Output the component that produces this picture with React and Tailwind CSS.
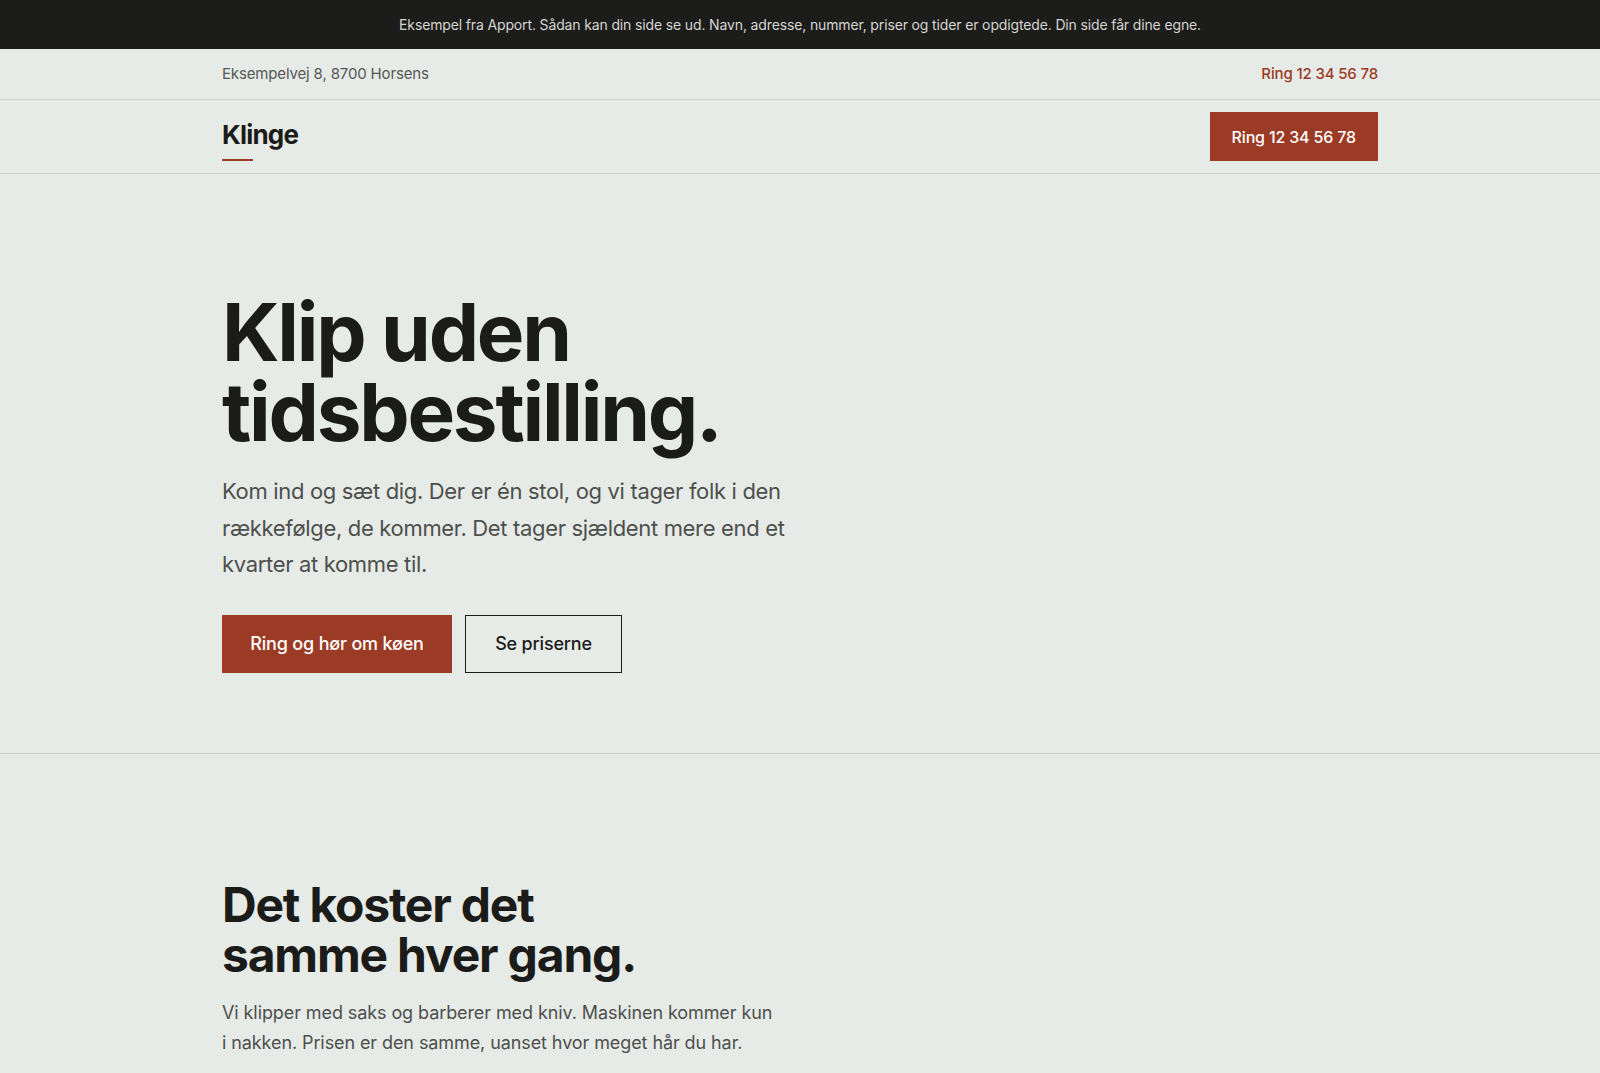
import React from 'react';

const App = () => {
    return (
        <div className="min-h-screen bg-[#e7ebe8] text-[#1b1c1a] font-['Inter','Liberation_Sans',sans-serif]">
            {/* Demo notice */}
            <div className="h-[49px] bg-[#1c1c1a] flex items-center justify-center">
                <p className="text-[14px] text-[#d6d6d2] tracking-[-0.01em]">
                    Eksempel fra Apport. Sådan kan din side se ud. Navn, adresse, nummer, priser og tider er opdigtede. Din side får dine egne.
                </p>
            </div>

            {/* Address bar */}
            <div className="border-b border-[#cdd1ce]">
                <div className="max-w-[1156px] mx-auto h-[50px] flex items-center justify-between">
                    <span className="text-[15px] text-[#555755] tracking-[-0.01em]">Eksempelvej 8, 8700 Horsens</span>
                    <a className="text-[15px] font-medium text-[#9b3a25] tracking-[-0.01em]">Ring 12 34 56 78</a>
                </div>
            </div>

            {/* Nav */}
            <header className="border-b border-[#cdd1ce]">
                <div className="max-w-[1156px] mx-auto h-[73px] flex items-center justify-between">
                    <div className="flex flex-col pt-[10px]">
                        <span className="text-[26px] font-bold tracking-[-0.03em] leading-none">Klinge</span>
                        <span className="mt-[11px] w-[31px] h-[2px] bg-[#9b3a25]" />
                    </div>
                    <a className="h-[49px] px-[22px] flex items-center bg-[#9b3a25] text-white text-[16px] font-medium tracking-[-0.01em]">
                        Ring 12 34 56 78
                    </a>
                </div>
            </header>

            {/* Hero */}
            <section className="border-b border-[#cdd1ce]">
                <div className="max-w-[1156px] mx-auto pt-[118px] pb-[80px]">
                    <h1 className="text-[80px] leading-[80px] font-bold tracking-[-0.028em]">
                        Klip uden<br />tidsbestilling.
                    </h1>
                    <p className="mt-[21px] max-w-[575px] text-[22px] leading-[36.5px] text-[#4d4f4c] tracking-[-0.015em]">
                        Kom ind og sæt dig. Der er én stol, og vi tager folk i den rækkefølge, de kommer. Det tager sjældent mere end et kvarter at komme til.
                    </p>
                    <div className="mt-[32px] flex gap-[13px]">
                        <a className="h-[58px] w-[230px] flex items-center justify-center bg-[#9b3a25] text-white text-[18px] font-medium tracking-[-0.01em]">
                            Ring og hør om køen
                        </a>
                        <a className="h-[58px] w-[157px] flex items-center justify-center border border-[#1b1c1a] text-[18px] font-medium tracking-[-0.01em]">
                            Se priserne
                        </a>
                    </div>
                </div>
            </section>

            {/* Prices */}
            <section>
                <div className="max-w-[1156px] mx-auto pt-[126px] pb-[80px]">
                    <h2 className="text-[48px] leading-[50px] font-bold tracking-[-0.025em]">
                        Det koster det<br />samme hver gang.
                    </h2>
                    <p className="mt-[18px] max-w-[555px] text-[18px] leading-[30px] text-[#4d4f4c] tracking-[-0.005em]">
                        Vi klipper med saks og barberer med kniv. Maskinen kommer kun i nakken. Prisen er den samme, uanset hvor meget hår du har.
                    </p>
                </div>
            </section>
        </div>
    );
};

export default App;
